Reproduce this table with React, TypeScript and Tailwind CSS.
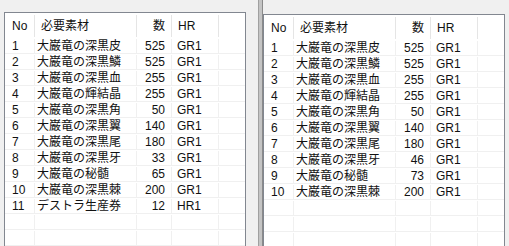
import React, { FC } from 'react'

type Row = [string, string, string, string]

const leftRows: Row[] = [
  ['1', '大巌竜の深黒皮', '525', 'GR1'],
  ['2', '大巌竜の深黒鱗', '525', 'GR1'],
  ['3', '大巌竜の深黒血', '255', 'GR1'],
  ['4', '大巌竜の輝結晶', '255', 'GR1'],
  ['5', '大巌竜の深黒角', '50', 'GR1'],
  ['6', '大巌竜の深黒翼', '140', 'GR1'],
  ['7', '大巌竜の深黒尾', '180', 'GR1'],
  ['8', '大巌竜の深黒牙', '33', 'GR1'],
  ['9', '大巌竜の秘髄', '65', 'GR1'],
  ['10', '大巌竜の深黒棘', '200', 'GR1'],
  ['11', 'デストラ生産券', '12', 'HR1'],
]

const rightRows: Row[] = [
  ['1', '大巌竜の深黒皮', '525', 'GR1'],
  ['2', '大巌竜の深黒鱗', '525', 'GR1'],
  ['3', '大巌竜の深黒血', '255', 'GR1'],
  ['4', '大巌竜の輝結晶', '255', 'GR1'],
  ['5', '大巌竜の深黒角', '50', 'GR1'],
  ['6', '大巌竜の深黒翼', '140', 'GR1'],
  ['7', '大巌竜の深黒尾', '180', 'GR1'],
  ['8', '大巌竜の深黒牙', '46', 'GR1'],
  ['9', '大巌竜の秘髄', '73', 'GR1'],
  ['10', '大巌竜の深黒棘', '200', 'GR1'],
]

const font = { fontFamily: '"Liberation Sans", "Noto Sans CJK JP", sans-serif' }

const ListView: FC<{ rows: Row[] }> = ({ rows }) => {
  const filled: (Row | null)[] = [...rows]
  while (filled.length < 14) filled.push(null)

  return (
    <div className="h-full overflow-hidden border-l border-t border-r border-[#828790] bg-white text-[12px] text-[#111]">
      <div className="flex h-[25px] items-center">
        <div className="flex h-[22px] w-[30px] items-center border-r border-[#e5e5e5] pl-[7px]">No</div>
        <div className="flex h-[22px] w-[102px] items-center border-r border-[#e5e5e5] pl-[6px]">必要素材</div>
        <div className="flex h-[22px] w-[35px] items-center justify-end border-r border-[#e5e5e5] pr-[6px]">数</div>
        <div className="flex h-[22px] w-[47px] items-center border-r border-[#e5e5e5] pl-[6px]">HR</div>
        <div className="flex-1" />
      </div>
      {filled.map((r, i) => (
        <div key={i} className="flex h-[16px] border-b border-[#f0f0f0] pt-px leading-[15px]">
          <div className="w-[30px] border-r border-[#f0f0f0] pl-[7px]">{r?.[0]}</div>
          <div className="w-[102px] border-r border-[#f0f0f0] pl-[2px] whitespace-nowrap">{r?.[1]}</div>
          <div className="w-[35px] border-r border-[#f0f0f0] pr-[6px] text-right">{r?.[2]}</div>
          <div className="w-[47px] border-r border-[#f0f0f0] pl-[5px]">{r?.[3]}</div>
          <div className="flex-1" />
        </div>
      ))}
    </div>
  )
}

const App: FC = () => {
  return (
    <div className="flex h-[246px] w-[509px] overflow-hidden bg-[#f0f0f0]" style={font}>
      <div className="w-[258px] pl-[4px] pr-[12px] pt-[12px]">
        <ListView rows={leftRows} />
      </div>
      <div className="flex w-[5px]">
        <div className="w-[1px] bg-[#a0a0a0]" />
        <div className="w-[3px] bg-[#c4c4c4]" />
        <div className="w-[1px] bg-[#8a8a8a]" />
      </div>
      <div className="w-[246px] pr-[4px] pt-[14px]">
        <ListView rows={rightRows} />
      </div>
    </div>
  )
}

export default App
